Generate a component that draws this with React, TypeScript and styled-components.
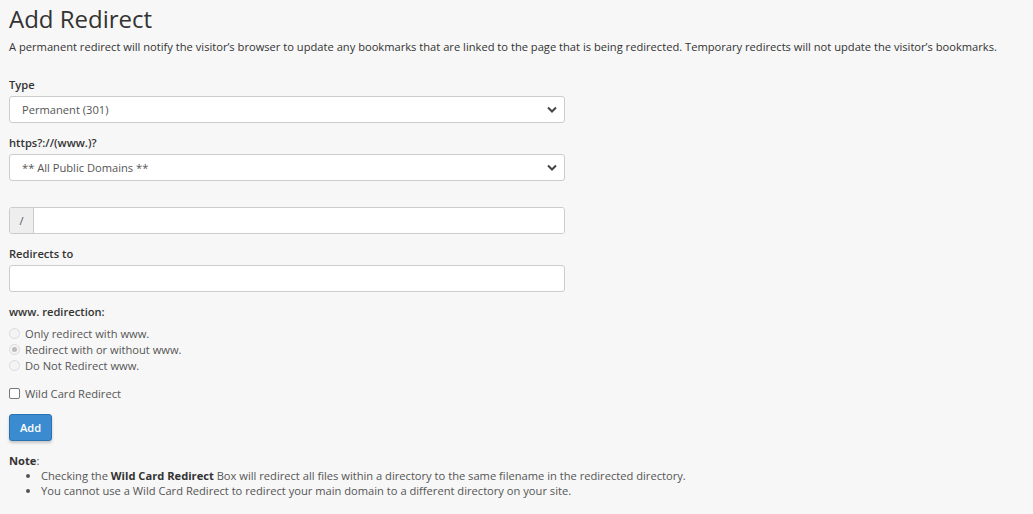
import styled, { createGlobalStyle } from "styled-components";

const GlobalStyle = createGlobalStyle`
	html, body {
		margin: 0;
		padding: 0;
		background: #f7f7f7;
	}
	body {
		font-family: "Open Sans", "Liberation Sans", sans-serif;
		font-size: 11.15px;
		color: #333;
	}
	* {
		box-sizing: border-box;
	}
`;

const Page = styled.div`
	padding: 0 9px 20px;
	min-height: 514px;
`;

const Title = styled.h1`
	margin: 0;
	padding-top: 3px;
	font-size: 24px;
	font-weight: 400;
	line-height: 32px;
	color: #333;
`;

const Description = styled.p`
	margin: 4px 0 22px;
	line-height: 16px;
	color: #333;
`;

const Form = styled.form`
	width: 556px;
	display: flex;
	flex-direction: column;
`;

const Group = styled.div<{ $gap?: number }>`
	display: flex;
	flex-direction: column;
	margin-bottom: ${(p) => p.$gap ?? 12}px;
`;

const Label = styled.label`
	font-weight: 600;
	line-height: 16px;
	margin-bottom: 3px;
	color: #333;
`;

const SelectBox = styled.div`
	position: relative;
	height: 27px;
	border: 1px solid #ccc;
	border-radius: 3px;
	background: #fff;
	display: flex;
	align-items: center;
	padding: 0 12px;
	color: #555;
	svg {
		position: absolute;
		right: 6px;
		top: 8px;
	}
`;

const InputGroup = styled.div`
	display: flex;
	height: 27px;
	border: 1px solid #ccc;
	border-radius: 3px;
	overflow: hidden;
	background: #fff;
`;

const Addon = styled.span`
	width: 24px;
	flex-shrink: 0;
	background: #eee;
	border-right: 1px solid #ccc;
	display: flex;
	align-items: center;
	justify-content: center;
	color: #555;
`;

const TextInput = styled.input`
	flex: 1;
	border: none;
	outline: none;
	font: inherit;
	padding: 0 12px;
	background: #fff;
`;

const PlainInput = styled.input`
	height: 27px;
	border: 1px solid #ccc;
	border-radius: 3px;
	font: inherit;
	padding: 0 12px;
	background: #fff;
	outline: none;
`;

const RadioList = styled.div`
	display: flex;
	flex-direction: column;
	margin-top: 2px;
`;

const OptionRow = styled.label`
	display: flex;
	align-items: center;
	gap: 5px;
	height: 16px;
	color: #555;
`;

const Radio = styled.span<{ $checked?: boolean }>`
	width: 11px;
	height: 11px;
	border-radius: 50%;
	border: 1px solid #dcdcdc;
	background: #f4f4f4;
	display: flex;
	align-items: center;
	justify-content: center;
	&::after {
		content: "";
		display: ${(p) => (p.$checked ? "block" : "none")};
		width: 5px;
		height: 5px;
		border-radius: 50%;
		background: #bdbdbd;
	}
`;

const Checkbox = styled.span`
	width: 11px;
	height: 11px;
	border: 1px solid #777;
	border-radius: 2px;
	background: #fff;
`;

const Button = styled.button`
	align-self: flex-start;
	height: 27px;
	padding: 0 10px;
	border: 1px solid #2a72b0;
	border-radius: 3px;
	background: #3a8bd0;
	color: #fff;
	font: inherit;
	font-weight: 600;
	box-shadow: 0 2px 3px rgba(0, 0, 0, 0.2);
	cursor: pointer;
`;

const Note = styled.div`
	margin-top: 12px;
	line-height: 15px;
	color: #555;
	strong {
		color: #333;
		font-weight: 700;
	}
	ul {
		margin: 0;
		padding-left: 32px;
	}
`;

function Chevron() {
	return (
		<svg width="12" height="9" viewBox="0 0 12 9">
			<path d="M2 2.5 L6 6.5 L10 2.5" fill="none" stroke="#444" strokeWidth="2" />
		</svg>
	);
}

export default function App() {
	return (
		<>
			<GlobalStyle />
			<Page>
				<Title>Add Redirect</Title>
				<Description>
					A permanent redirect will notify the visitor’s browser to update any bookmarks that are linked to the page that
					is being redirected. Temporary redirects will not update the visitor’s bookmarks.
				</Description>
				<Form onSubmit={(e) => e.preventDefault()}>
					<Group>
						<Label>Type</Label>
						<SelectBox>
							Permanent (301)
							<Chevron />
						</SelectBox>
					</Group>
					<Group $gap={26}>
						<Label>https?://(www.)?</Label>
						<SelectBox>
							** All Public Domains **
							<Chevron />
						</SelectBox>
					</Group>
					<Group>
						<InputGroup>
							<Addon>/</Addon>
							<TextInput />
						</InputGroup>
					</Group>
					<Group>
						<Label>Redirects to</Label>
						<PlainInput />
					</Group>
					<Group>
						<Label>www. redirection:</Label>
						<RadioList>
							<OptionRow>
								<Radio />
								Only redirect with www.
							</OptionRow>
							<OptionRow>
								<Radio $checked />
								Redirect with or without www.
							</OptionRow>
							<OptionRow>
								<Radio />
								Do Not Redirect www.
							</OptionRow>
						</RadioList>
					</Group>
					<Group $gap={13}>
						<OptionRow>
							<Checkbox />
							Wild Card Redirect
						</OptionRow>
					</Group>
					<Button type="submit">Add</Button>
				</Form>
				<Note>
					<strong>Note</strong>:
					<ul>
						<li>
							Checking the <strong>Wild Card Redirect</strong> Box will redirect all files within a directory to the same
							filename in the redirected directory.
						</li>
						<li>You cannot use a Wild Card Redirect to redirect your main domain to a different directory on your site.</li>
					</ul>
				</Note>
			</Page>
		</>
	);
}
